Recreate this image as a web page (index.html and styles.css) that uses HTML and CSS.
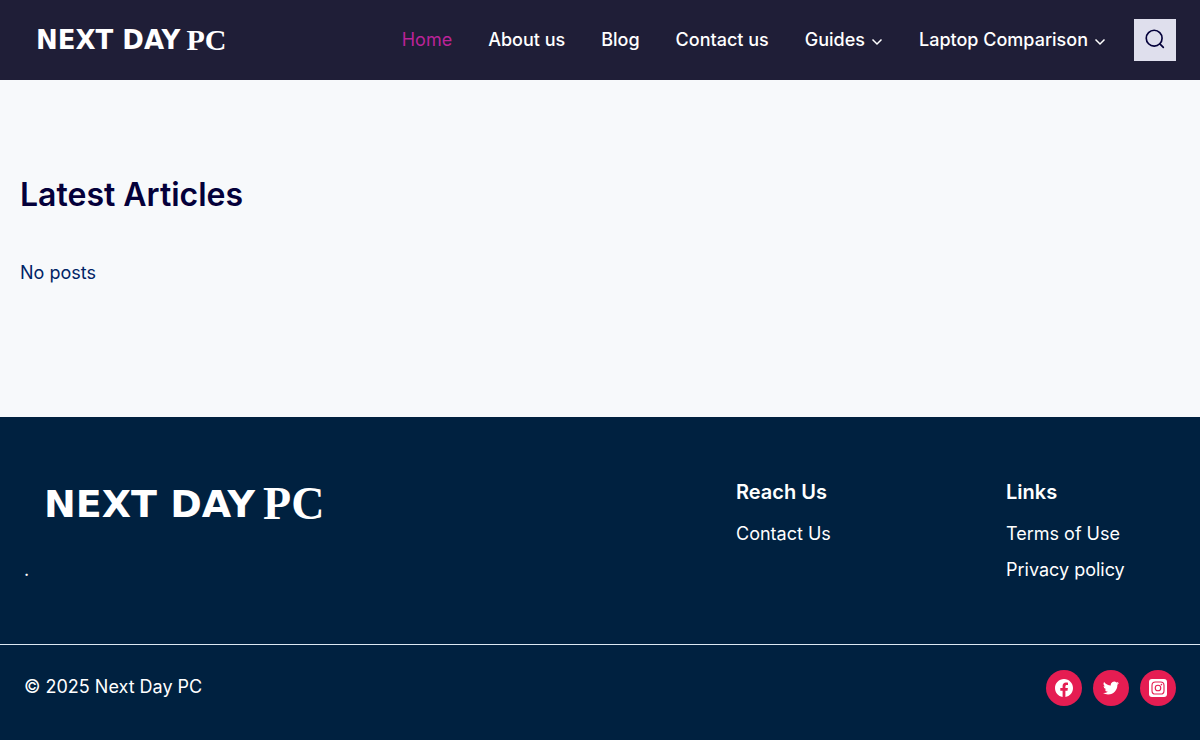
FILE: index.html
```html
<!DOCTYPE html>
<html lang="en">
<head>
  <meta charset="UTF-8">
  <meta name="viewport" content="width=device-width, initial-scale=1.0">
  <title>Next Day PC</title>
  <link rel="stylesheet" href="styles.css">
</head>
<body>
  <header class="site-header">
    <a class="logo" href="#" aria-label="Next Day PC"><span class="logo-main">NEXT DAY</span><span class="logo-pc">PC</span></a>

    <div class="header-right">
      <nav class="main-nav" aria-label="Primary">
        <a class="current" href="#">Home</a>
        <a href="#">About us</a>
        <a href="#">Blog</a>
        <a href="#">Contact us</a>
        <a href="#">Guides
          <svg class="chevron" viewBox="0 0 12 12" aria-hidden="true"><path d="M1.5 3.500 6 8 10.500 3.500"/></svg></a>
        <a href="#">Laptop Comparison
          <svg class="chevron" viewBox="0 0 12 12" aria-hidden="true"><path d="M1.5 3.500 6 8 10.500 3.500"/></svg></a>
      </nav>
      <button class="search-toggle" type="button" aria-label="Search">
        <svg viewBox="0 0 24 24" aria-hidden="true"><circle cx="11" cy="11" r="9.500"/><path d="M17.800 17.800 22 22"/></svg>
      </button>
    </div>
  </header>

  <main class="content">
    <h1>Latest Articles</h1>
    <p>No posts</p>
  </main>

  <footer class="site-footer">
    <div class="footer-top">
      <div class="footer-brand">
        <a class="logo logo-large" href="#" aria-label="Next Day PC"><span class="logo-main">NEXT DAY</span><span class="logo-pc">PC</span></a>
        <p>.</p>
      </div>
      <div class="footer-col">
        <h2>Reach Us</h2>
        <a href="#">Contact Us</a>
      </div>
      <div class="footer-col">
        <h2>Links</h2>
        <a href="#">Terms of Use</a>
        <a href="#">Privacy policy</a>
      </div>
    </div>

    <div class="footer-bottom">
      <p>© 2025 Next Day PC</p>
      <div class="social">
        <a href="#" aria-label="Facebook">
          <svg viewBox="0 0 24 24"><path d="M24 12.073C24 5.405 18.627 0 12 0S0 5.405 0 12.073C0 18.100 4.388 23.094 10.125 24v-8.437H7.078v-3.490h3.047V9.413c0-3.026 1.792-4.697 4.533-4.697 1.312 0 2.686.236 2.686.236v2.971h-1.513c-1.491 0-1.956.931-1.956 1.886v2.264h3.328l-.532 3.490h-2.796V24C19.612 23.094 24 18.100 24 12.073z"/></svg>
        </a>
        <a href="#" aria-label="Twitter">
          <svg class="twitter" viewBox="0 0 24 24"><path d="M23.950 4.570a10 10 0 0 1-2.820.770 4.960 4.960 0 0 0 2.160-2.720 9.900 9.900 0 0 1-3.130 1.190 4.920 4.920 0 0 0-8.380 4.480A13.930 13.930 0 0 1 1.640 3.160a4.920 4.920 0 0 0 1.520 6.570 4.900 4.900 0 0 1-2.230-.610v.060a4.920 4.920 0 0 0 3.950 4.830 5 5 0 0 1-2.210.080 4.940 4.940 0 0 0 4.600 3.420A9.870 9.870 0 0 1 0 19.540a13.990 13.990 0 0 0 7.550 2.210c9.050 0 14-7.500 14-13.980 0-.210 0-.420-.020-.630a9.940 9.940 0 0 0 2.420-2.570z"/></svg>
        </a>
        <a href="#" aria-label="Instagram">
          <svg viewBox="0 0 24 24"><rect width="24" height="24" rx="4"/><g class="camera"><rect x="4" y="4" width="16" height="16" rx="4.500"/><circle cx="12" cy="12" r="3.700"/></g><circle class="dot" cx="16.600" cy="7.400" r="1.100"/></svg>
        </a>
      </div>
    </div>
  </footer>
</body>
</html>
```
FILE: styles.css
```css
* {
  box-sizing: border-box;
}
body {
  margin: 0;
  min-height: 100vh;
  display: flex;
  flex-direction: column;
  background: #f7f9fb;
  color: #002466;
  font-family: Inter, sans-serif;
  font-size: 18px;
  line-height: 28px;
}
a {
  color: inherit;
  text-decoration: none;
}
h1, h2, p {
  margin: 0;
}

/* Header */
.site-header {
  display: flex;
  align-items: center;
  justify-content: space-between;
  min-height: 80px;
  padding: 0 24px 0 36px;
  background: #1f1e37;
  color: #fff;
}
.logo {
  display: flex;
  align-items: center;
  gap: 6px;
  color: #fff;
  line-height: 1;
  white-space: nowrap;
}
.logo-main {
  font-family: "DejaVu Sans", sans-serif;
  font-weight: bold;
  font-size: 26px;
}
.logo-pc {
  font-family: "Liberation Serif", serif;
  font-weight: bold;
  font-size: 30px;
}
.header-right {
  display: flex;
  align-items: center;
  gap: 10px;
}
.main-nav {
  display: flex;
}
.main-nav a {
  display: flex;
  align-items: center;
  gap: 6px;
  padding: 0 18px;
  font-weight: 500;
  white-space: nowrap;
}
.main-nav .current {
  color: #bb2398;
  font-weight: 400;
}
.chevron {
  width: 12px;
  height: 12px;
  margin-top: 3px;
  fill: none;
  stroke: currentColor;
  stroke-width: 1.5;
}
.search-toggle {
  display: flex;
  align-items: center;
  justify-content: center;
  width: 42px;
  height: 42px;
  padding: 0 0 2px;
  border: 0;
  background: #dfdfed;
  color: #04003a;
  cursor: pointer;
}
.search-toggle svg {
  width: 20px;
  height: 20px;
  fill: none;
  stroke: currentColor;
  stroke-width: 2;
  stroke-linecap: round;
}

/* Articles */
.content {
  padding: 92px 20px 130px;
}
.content h1 {
  margin-bottom: 42px;
  color: #04003a;
  font-size: 32px;
  font-weight: 600;
  line-height: 45px;
}

/* Footer */
.site-footer {
  flex: 1;
  background: #002140;
  color: #fff;
}
.footer-top {
  display: grid;
  grid-template-columns: 18fr 5fr 5fr;
  gap: 100px;
  padding: 61px 24px 60px;
}
.footer-brand .logo {
  gap: 8px;
  padding: 3px 0 29px 20px;
}
.logo-large .logo-main {
  font-size: 38px;
}
.logo-large .logo-pc {
  font-size: 46px;
}
.footer-col {
  display: flex;
  flex-direction: column;
  gap: 8px;
}
.footer-col h2 {
  margin-bottom: 6px;
  font-size: 20px;
  font-weight: 600;
}
.footer-bottom {
  display: flex;
  align-items: flex-start;
  justify-content: space-between;
  padding: 25px 24px;
  border-top: 1px solid #dce8f2;
}
.footer-bottom p {
  padding-top: 3px;
}
.social {
  display: flex;
  gap: 11px;
}
.social a {
  display: flex;
  align-items: center;
  justify-content: center;
  width: 36px;
  height: 36px;
  border-radius: 50%;
  background: #e51d52;
}
.social svg {
  width: 18px;
  height: 18px;
  fill: #fff;
}
.social .twitter {
  width: 16px;
  height: 16px;
}
.social .camera {
  fill: none;
  stroke: #e51d52;
  stroke-width: 1.5;
}
.social .dot {
  fill: #e51d52;
}
```
